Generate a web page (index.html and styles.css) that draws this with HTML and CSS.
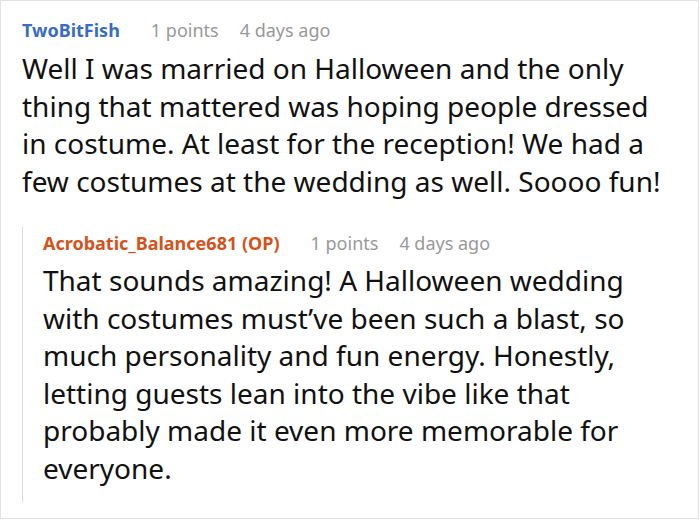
FILE: index.html
```html
<!DOCTYPE html>
<html>
<head>
<meta charset="utf-8">
<link rel="stylesheet" href="styles.css">
</head>
<body>
<div class="frame">
  <div class="comment">
    <div class="meta">
      <span class="author">TwoBitFish</span>
      <span class="info">1 points</span>
      <span class="info">4 days ago</span>
    </div>
    <p class="text">Well I was married on Halloween and the only thing that mattered was hoping people dressed in costume. At least for the reception! We had a few costumes at the wedding as well. Soooo fun!</p>
    <div class="reply">
      <div class="meta">
        <span class="author op">Acrobatic_Balance681 (OP)</span>
        <span class="info">1 points</span>
        <span class="info">4 days ago</span>
      </div>
      <p class="text">That sounds amazing! A Halloween wedding with costumes must’ve been such a blast, so much personality and fun energy. Honestly, letting guests lean into the vibe like that probably made it even more memorable for everyone.</p>
    </div>
  </div>
</div>
</body>
</html>
```
FILE: styles.css
```css
html, body {
  margin: 0;
  padding: 0;
  background: #fff;
}
body {
  font-family: "Noto Sans", "Open Sans", sans-serif;
  color: #111;
}
.frame {
  box-sizing: border-box;
  width: 699px;
  height: 519px;
  border: 1px solid #e2e2e2;
  overflow: hidden;
}
.comment {
  padding: 13px 32px 0 21px;
}
.meta {
  display: flex;
  gap: 21px;
  font-size: 18px;
  line-height: 32px;
  height: 32px;
}
.author {
  font-weight: 700;
  color: #3a6cc0;
  margin-right: 10px;
}
.author.op {
  color: #d4531d;
}
.info {
  color: #999;
}
.text {
  margin: 4px 0 0;
  font-size: 28px;
  line-height: 37.5px;
}
.reply {
  margin-top: 43px;
  border-left: 1px solid #dcdcdc;
  padding: 0 0 15px 20px;
}
.reply .meta {
  margin-top: -16px;
}
.reply .text {
  margin-top: 3px;
}
```
